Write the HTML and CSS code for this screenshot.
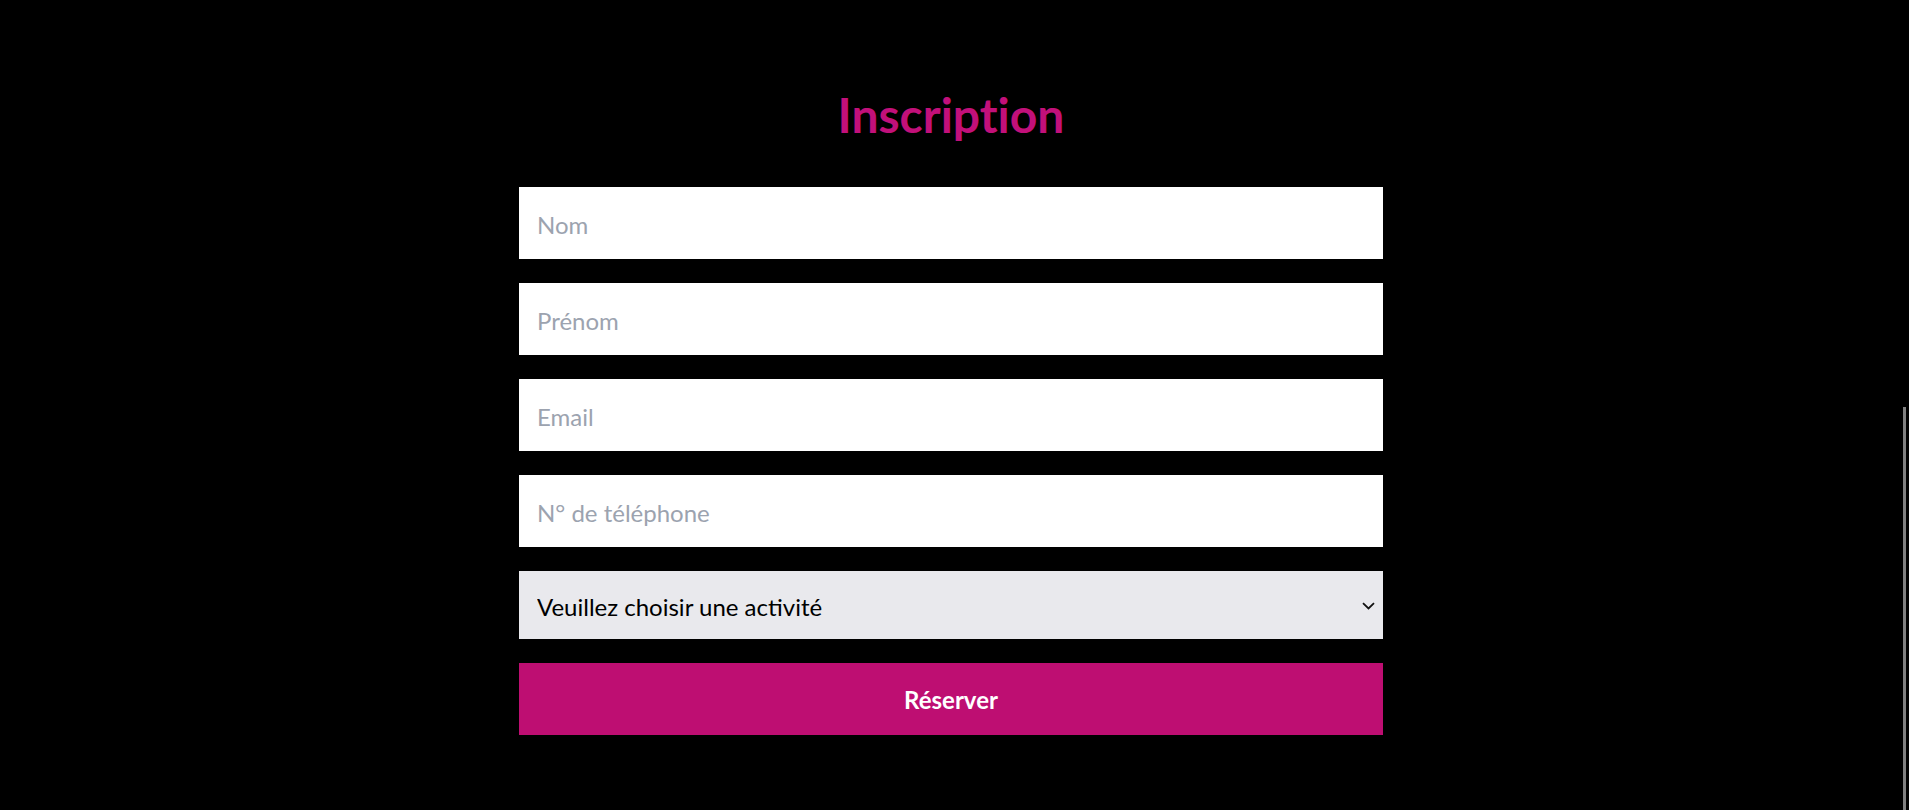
FILE: index.html
```html
<!DOCTYPE html>
<html lang="fr">
<head>
<meta charset="utf-8">
<title>Inscription</title>
<link rel="stylesheet" href="styles.css">
</head>
<body>
<main class="page">
  <section class="signup">
    <h1 class="signup-title">Inscription</h1>
    <form class="signup-form">
      <input class="field" type="text" placeholder="Nom">
      <input class="field" type="text" placeholder="Prénom">
      <input class="field" type="email" placeholder="Email">
      <input class="field" type="tel" placeholder="N° de téléphone">
      <div class="select-wrap">
        <select class="select">
          <option>Veuillez choisir une activité</option>
        </select>
        <svg class="chevron" width="13" height="8" viewBox="0 0 13 8" aria-hidden="true">
          <path d="M1 1.2 L6.5 6.4 L12 1.2" fill="none" stroke="#111" stroke-width="1.8"/>
        </svg>
      </div>
      <button class="submit" type="button">Réserver</button>
    </form>
  </section>
</main>
<div class="scroll-thumb"></div>
</body>
</html>
```
FILE: styles.css
```css
html, body {
  margin: 0;
  padding: 0;
  background: #000;
  height: 100%;
  overflow: hidden;
}

body {
  font-family: "Lato", "Liberation Sans", sans-serif;
  font-variant-ligatures: none;
}

.page {
  padding: 86px 7px 0 0;
  box-sizing: border-box;
  min-height: 810px;
}

.signup {
  width: 864px;
  margin: 0 auto;
}

.signup-title {
  margin: 0 0 44px;
  text-align: center;
  color: #c2107a;
  font-size: 48px;
  line-height: 57px;
  font-weight: 700;
  font-variant-ligatures: none;
}

.signup-form {
  display: flex;
  flex-direction: column;
  gap: 24px;
}

.field {
  display: block;
  height: 72px;
  border: none;
  outline: none;
  background: #fff;
  padding: 2px 18px 0;
  box-sizing: border-box;
  font-family: inherit;
  font-size: 24px;
  color: #111;
}

.field::placeholder {
  color: #9ca3af;
}

.select-wrap {
  position: relative;
}

.select {
  display: block;
  width: 100%;
  height: 68px;
  border: none;
  outline: none;
  border-radius: 0;
  appearance: none;
  -webkit-appearance: none;
  background: #e9e9ed;
  padding: 2px 18px 0;
  box-sizing: border-box;
  font-family: inherit;
  font-size: 24px;
  color: #000;
}

.chevron {
  position: absolute;
  right: 8px;
  top: 31px;
}

.submit {
  display: block;
  height: 72px;
  border: none;
  background: #be0e72;
  color: #fff;
  font-family: inherit;
  font-size: 24px;
  font-weight: 700;
  padding-top: 2px;
  cursor: pointer;
}

.scroll-thumb {
  position: fixed;
  left: 1903px;
  top: 407px;
  width: 3px;
  height: 403px;
  background: #808080;
}
```
